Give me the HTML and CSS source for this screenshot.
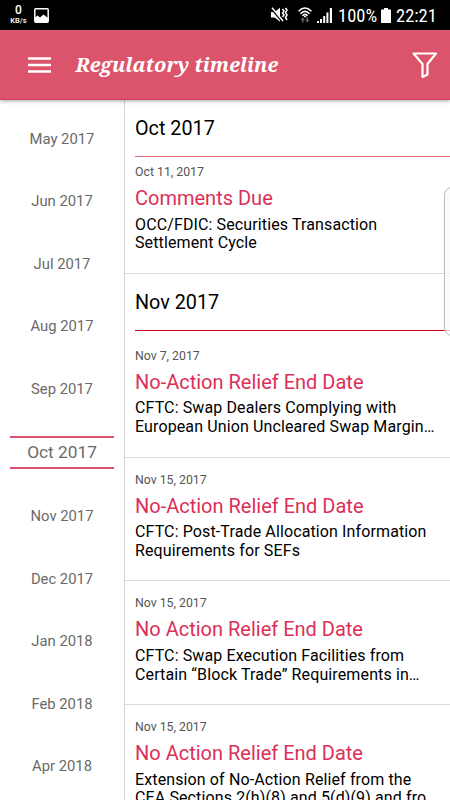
FILE: index.html
```
<!DOCTYPE html>
<html lang="en">
<head>
  <meta charset="utf-8">
  <title>Regulatory timeline</title>
  <link rel="stylesheet" href="styles.css">
</head>
<body>
  <div class="status-bar">
    <div class="net-speed"><b>0</b><span>KB/s</span></div>
    <svg class="picture" width="15" height="15" viewBox="0 0 15 15"><rect x="0.8" y="0.8" width="13.4" height="13.4" rx="1" fill="none" stroke="#fff" stroke-width="1.5"/><path d="M1 9.500l2.500-2L6 9.500 9.500 6.500 14 10V14H1z" fill="#fff"/></svg>
    <div class="status-right">
      <svg class="mute" width="17" height="16" viewBox="0 0 17 16"><path d="M0 5h3.500L9 .8V14.500L3.500 10.500H0z" fill="#fff"/><path d="M.2 1.200L11.500 14.500" stroke="#000" stroke-width="2.400"/><path d="M1 .8L12 14" stroke="#fff" stroke-width="1.500"/><path d="M11.500 2l1.500 2-1.500 2 1.500 2-1.500 2M14.500 1l1.500 2-1.500 2.500 1.500 2.500-1.500 2.500 1.500 2.500" fill="none" stroke="#fff" stroke-width="1.500"/></svg>
      <svg class="wifi" width="14" height="16" viewBox="0 0 14 16"><g fill="none" stroke="#fff" stroke-width="1.600"><path d="M.6 4.200Q7-2.200 13.400 4.200M2.500 6.700Q7 2 11.500 6.700M4.500 8.800Q7 6 9.500 8.800"/></g><path d="M5.700 9.200L7 8.500l1.300.7L7 10.800z" fill="#fff"/><path d="M2.500 12.800L4.700 10.300 6.900 12.800H5.500V15.500H3.900V12.800zM7.100 13L9.300 15.500 11.500 13H10.100V10.300H8.500V13z" fill="#666"/></svg>
      <svg class="signal" width="15" height="15" viewBox="0 0 15 15"><path d="M0 13h2v2H0zM3 11h2v4H3zM6.200 8h2v7h-2zM9.400 4.500h2V15h-2zM12.800 0H15v15h-2.200z" fill="#fff"/></svg>
      <span class="percent">100%</span>
      <svg class="battery" width="10" height="15" viewBox="0 0 10 15"><path d="M3 0h4v1.500h3V15H0V1.500h3z" fill="#fff"/></svg>
      <span class="clock">22:21</span>
    </div>
  </div>

  <header class="app-bar">
    <svg class="menu-icon" width="23" height="16" viewBox="0 0 23 16"><path d="M0 1.500h23M0 8h23M0 14.500h23" stroke="#fff" stroke-width="2.600"/></svg>
    <h1>Regulatory timeline</h1>
    <svg class="filter-icon" width="26" height="27" viewBox="0 0 26 27"><path d="M1.500 1.500H24L15.500 12V22.500L10.500 25V12z" fill="none" stroke="#fff" stroke-width="2.200" stroke-linejoin="round"/></svg>
  </header>

  <div class="content">
    <nav class="months">
      <div class="month">May 2017</div>
      <div class="month">Jun 2017</div>
      <div class="month">Jul 2017</div>
      <div class="month">Aug 2017</div>
      <div class="month">Sep 2017</div>
      <div class="month selected"><span>Oct 2017</span></div>
      <div class="month">Nov 2017</div>
      <div class="month">Dec 2017</div>
      <div class="month">Jan 2018</div>
      <div class="month">Feb 2018</div>
      <div class="month">Apr 2018</div>
    </nav>

    <main class="timeline">
      <h2 class="section current">Oct 2017</h2>
      <article class="event under-header">
        <time>Oct 11, 2017</time>
        <h3>Comments Due</h3>
        <p>OCC/FDIC: Securities Transaction<br>Settlement Cycle</p>
      </article>

      <h2 class="section">Nov 2017</h2>
      <article class="event">
        <time>Nov 7, 2017</time>
        <h3>No-Action Relief End Date</h3>
        <p>CFTC: Swap Dealers Complying with<br>European Union Uncleared Swap Margin…</p>
      </article>
      <article class="event">
        <time>Nov 15, 2017</time>
        <h3>No-Action Relief End Date</h3>
        <p>CFTC: Post-Trade Allocation Information<br>Requirements for SEFs</p>
      </article>
      <article class="event">
        <time>Nov 15, 2017</time>
        <h3>No Action Relief End Date</h3>
        <p>CFTC: Swap Execution Facilities from<br>Certain “Block Trade” Requirements in…</p>
      </article>
      <article class="event">
        <time>Nov 15, 2017</time>
        <h3>No Action Relief End Date</h3>
        <p>Extension of No-Action Relief from the<br>CEA Sections 2(h)(8) and 5(d)(9) and fro</p>
      </article>
    </main>
  </div>

  <div class="edge-handle"></div>
</body>
</html>
```
FILE: styles.css
```
* {
  box-sizing: border-box;
}
body {
  margin: 0;
  width: 450px;
  height: 800px;
  overflow: hidden;
  position: relative;
  display: flex;
  flex-direction: column;
  background: #fff;
  font-family: Roboto, "Liberation Sans", sans-serif;
}
h1, h2, h3, p {
  margin: 0;
  font-weight: 400;
}
svg {
  display: block;
  flex: none;
}

/* status bar */
.status-bar {
  flex: none;
  height: 30px;
  padding: 0 13px 0 9px;
  display: flex;
  align-items: center;
  background: #000;
  color: #fff;
}
.net-speed {
  width: 19px;
  display: flex;
  flex-direction: column;
  align-items: center;
  font-size: 7.5px;
  font-weight: 500;
  line-height: 9px;
}
.net-speed b {
  font-size: 12px;
  line-height: 11px;
  font-weight: 500;
}
.picture {
  margin-left: 6px;
}
.status-right {
  margin-left: auto;
  display: flex;
  align-items: center;
  font-size: 18.5px;
}
.mute {
  margin-right: 1px;
}
.wifi {
  margin-left: 9px;
}
.signal {
  margin-left: 5px;
}
.percent {
  width: 39px;
  margin-left: 6px;
}
.battery {
  margin-left: 4px;
}
.clock {
  width: 41px;
  margin-left: 5px;
}
.percent, .clock {
  padding-top: 2px;
  font-family: "Roboto Condensed", Roboto, sans-serif;
  white-space: nowrap;
}

/* app bar */
.app-bar {
  flex: none;
  height: 70px;
  padding: 0 12px 0 28px;
  display: flex;
  align-items: center;
  background: #dc546b;
  border-bottom: 1px solid #cd3f5c;
  box-shadow: 0 1px 4px rgba(0, 0, 0, 0.35);
  z-index: 1;
}
.app-bar h1 {
  margin-left: 24.5px;
  color: #fff;
  font: italic bold 20px "Noto Serif", "DejaVu Serif Condensed", "DejaVu Serif", serif;
  white-space: nowrap;
}
.filter-icon {
  margin: 1px 0 0 auto;
}

.content {
  flex: 1;
  min-height: 0;
  display: flex;
  overflow: hidden;
}

/* month picker */
.months {
  flex: none;
  width: 125px;
  padding-top: 7.5px;
  border-right: 1px solid #d3d3d3;
}
.month {
  height: 62.5px;
  display: flex;
  align-items: center;
  justify-content: center;
  color: #6a6a6a;
  font-size: 14.8px;
}
.month.selected {
  height: 65px;
  padding-bottom: 1px;
  font-size: 17.3px;
}
.selected span {
  width: 104px;
  height: 33px;
  border: solid #dc546b;
  border-width: 2px 0;
  line-height: 29px;
  text-align: center;
}

/* timeline */
.timeline {
  flex: 1;
  min-width: 0;
}
.section {
  height: 57px;
  margin: 0 0 3px 10px;
  border-bottom: 1px solid #d0021b;
  font-size: 19.8px;
  line-height: 57px;
  color: #000;
}
.section.current {
  border-bottom-color: #e0667c;
}
.event {
  height: 123.75px;
  padding: 14px 0 0 10px;
  border-bottom: 1px solid #d9d9d9;
}
.event.under-header {
  margin-top: -10px;
}
.event time {
  display: block;
  font-size: 12.3px;
  line-height: 16px;
  color: #555;
}
.event h3 {
  margin-top: 6px;
  font-size: 20px;
  line-height: 24px;
  color: #dc2f57;
}
.event p {
  margin-top: 5.5px;
  font-size: 16px;
  line-height: 18.75px;
  letter-spacing: 0.12px;
  color: #000;
  white-space: nowrap;
}

.edge-handle {
  position: absolute;
  top: 187px;
  right: -10px;
  width: 16px;
  height: 149px;
  border: 1px solid #bbb;
  border-radius: 8px;
  background: rgba(250, 250, 250, 0.75);
}
```
